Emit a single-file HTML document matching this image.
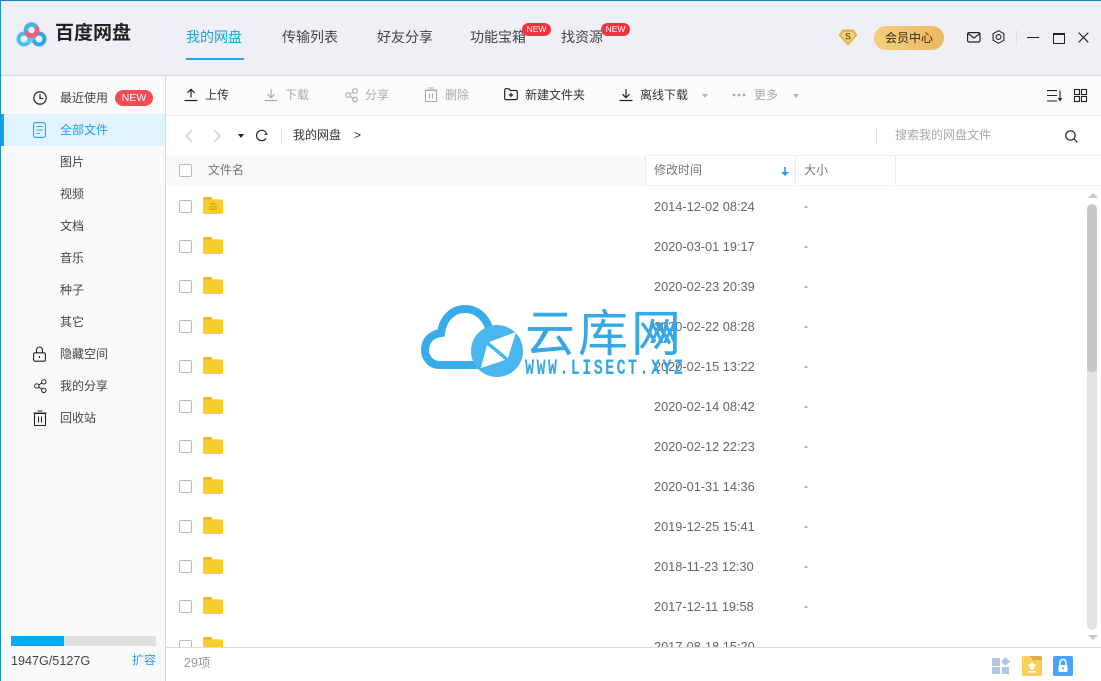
<!DOCTYPE html>
<html lang="zh"><head><meta charset="utf-8">
<style>
html,body{margin:0;padding:0}
body{width:1101px;height:681px;position:relative;overflow:hidden;background:#fff;font-family:"Liberation Sans","Noto Sans CJK SC",sans-serif;font-size:12px;color:#444}
.a{position:absolute}
.t{position:absolute;white-space:nowrap;line-height:16px}
svg{position:absolute;overflow:visible}
.nav{font-size:14px;line-height:20px;color:#444}
.new{position:absolute;background:#f5333f;color:#fff;font-size:8.5px;line-height:13px;height:13px;width:29px;text-align:center;border-radius:7px}
.tb{color:#333}.dis{color:#aaa}
.cb{position:absolute;left:179px;width:11px;height:11px;border:1px solid #b9b9b9;border-radius:2px;background:#fff}
.date{position:absolute;left:654px;color:#666;line-height:16px;white-space:nowrap;font-size:12.75px}
.dash{position:absolute;left:804px;color:#666;line-height:16px}
.f{position:absolute;left:203px}
.side{position:absolute;left:60px;color:#444;line-height:16px;white-space:nowrap}
</style></head><body>
<svg width="0" height="0" style="left:0;top:0"><defs><g id="fd"><path d="M0 2a2 2 0 0 1 2-2h5.500a2 2 0 0 1 1.500 1l1 2H0z" fill="#ecbc24"/><rect x="0" y="2.500" width="20" height="14.500" rx="2" fill="#f8cb2e"/></g></defs></svg>
<!-- header -->
<div class="a" style="left:0;top:0;width:1101px;height:75px;background:#eef0f6"></div>
<div class="a" style="left:0;top:75px;width:1101px;height:1px;background:#d6d9e3"></div>
<!-- sidebar -->
<div class="a" style="left:0;top:76px;width:165px;height:605px;background:#f9fafc"></div>
<div class="a" style="left:165px;top:76px;width:1px;height:605px;background:#d6d9e0"></div>
<div class="a" style="left:1px;top:114px;width:164px;height:32px;background:#e0f3fe"></div>
<div class="a" style="left:0;top:114px;width:4px;height:32px;background:#06a7ff"></div>
<!-- toolbar -->
<div class="a" style="left:166px;top:76px;width:935px;height:39px;background:#fafbfd"></div>
<div class="a" style="left:166px;top:115px;width:935px;height:1px;background:#eeeff2"></div>
<div class="a" style="left:166px;top:155px;width:480px;height:31px;background:#f7f8fa"></div>
<div class="a" style="left:646px;top:155px;width:455px;height:1px;background:#f0f1f3"></div>
<div class="a" style="left:646px;top:185px;width:455px;height:1px;background:#f2f3f5"></div>
<div class="a" style="left:645px;top:156px;width:1px;height:30px;background:#e8eaee"></div>
<div class="a" style="left:795px;top:156px;width:1px;height:30px;background:#e8eaee"></div>
<div class="a" style="left:895px;top:156px;width:1px;height:30px;background:#e8eaee"></div>
<!-- window border -->
<div class="a" style="left:0;top:0;width:1101px;height:1px;background:#1b80bd"></div>
<div class="a" style="left:0;top:0;width:1px;height:681px;background:#1b90d0"></div>

<!-- logo -->
<svg style="left:15px;top:21px" width="34" height="28" viewBox="0 0 34 28" fill="none">
<circle cx="9" cy="18" r="5.500" stroke="#45bff2" stroke-width="4"/>
<circle cx="24" cy="18" r="5.500" stroke="#2fa3ec" stroke-width="4"/>
<path d="M13 22 Q17 18 20.500 14" stroke="#5cc6f0" stroke-width="4"/>
<circle cx="16.500" cy="9" r="5.500" stroke="#4bb4dc" stroke-width="4.500"/>
<path d="M11.300 11 A5.500 5.500 0 0 0 21.500 11.500 A5.500 5.500 0 0 0 21 5.800" stroke="#ee5f72" stroke-width="4.500"/>
</svg>
<div class="t" style="left:55px;top:22px;font-size:19px;font-weight:bold;line-height:24px;color:#222">百度网盘</div>
<!-- nav -->
<div class="t nav" style="left:186px;top:27px;color:#1fa0e8">我的网盘</div>
<div class="a" style="left:186px;top:58px;width:58px;height:2px;background:#1fa6ee"></div>
<div class="t nav" style="left:282px;top:27px">传输列表</div>
<div class="t nav" style="left:377px;top:27px">好友分享</div>
<div class="t nav" style="left:470px;top:27px">功能宝箱</div>
<div class="new" style="left:522px;top:23px">NEW</div>
<div class="t nav" style="left:561px;top:27px">找资源</div>
<div class="new" style="left:601px;top:23px">NEW</div>
<!-- right header -->
<svg style="left:838px;top:29px" width="20" height="17" viewBox="0 0 20 17"><path d="M5 1h10l4 5-9 10L1 6z" fill="#e3b24e" stroke="#e5b650" stroke-width="1"/><path d="M6 3h8l3 3-7 8-7-8z" fill="#f6d676"/><text x="10" y="10.500" font-size="9" font-weight="bold" text-anchor="middle" fill="#7a5a1a" font-family="Liberation Sans">S</text></svg>
<div class="a" style="left:874px;top:26px;width:70px;height:24px;border-radius:12px;background:linear-gradient(90deg,#f5cf7c,#e9b964)"></div>
<div class="t" style="left:885px;top:30px;color:#3a2a10">会员中心</div>
<svg style="left:967px;top:32px" width="14" height="11" viewBox="0 0 14 11" fill="none" stroke="#222" stroke-width="1.200"><rect x=".6" y=".6" width="12.400" height="9.400" rx="1.500"/><path d="M1 1.500l6 4.500 6-4.500"/></svg>
<svg style="left:992px;top:30px" width="13" height="14" viewBox="0 0 13 14" fill="none" stroke="#222" stroke-width="1.100"><path d="M6.500.7l5.400 3v6.600l-5.400 3-5.400-3V3.700z"/><circle cx="6.500" cy="7" r="2.400"/></svg>
<div class="a" style="left:1016px;top:30px;width:1px;height:16px;background:#dcdee5"></div>
<div class="a" style="left:1027px;top:37px;width:12px;height:1px;background:#222"></div>
<div class="a" style="left:1053px;top:33px;width:10px;height:8px;border:1px solid #222;border-top:2px solid #222"></div>
<svg style="left:1078px;top:32px" width="11" height="11" viewBox="0 0 11 11" stroke="#222" stroke-width="1.100"><path d="M.7.7l9.600 9.600M10.300.7L.7 10.300"/></svg>

<!-- toolbar items -->
<svg style="left:184px;top:88px" width="14" height="14" viewBox="0 0 14 14" fill="none" stroke="#222" stroke-width="1.200"><path d="M7 9.500V1.500M3.500 4.800L7 1.300l3.500 3.500M.5 12.500h13"/></svg>
<div class="t tb" style="left:205px;top:87px">上传</div>
<svg style="left:264px;top:88px" width="14" height="14" viewBox="0 0 14 14" fill="none" stroke="#aaa" stroke-width="1.200"><path d="M7 1v8.500M3.500 6.200L7 9.700l3.500-3.500M.5 12.500h13"/></svg>
<div class="t dis" style="left:285px;top:87px">下载</div>
<svg style="left:345px;top:88px" width="13" height="14" viewBox="0 0 13 14" fill="none" stroke="#aaa" stroke-width="1.100"><circle cx="3" cy="7" r="2.300"/><circle cx="10" cy="3" r="2.300"/><circle cx="10" cy="11.500" r="2.300"/><path d="M5 5.800l3-1.700M5 8.300l3 1.900"/></svg>
<div class="t dis" style="left:365px;top:87px">分享</div>
<svg style="left:424px;top:87px" width="14" height="15" viewBox="0 0 14 15" fill="none" stroke="#aaa" stroke-width="1.100"><path d="M.5 3h13M4.500 1h5"/><rect x="1.500" y="3.500" width="11" height="11" rx="1"/><path d="M5.500 6.500v5M8.500 6.500v5"/></svg>
<div class="t dis" style="left:445px;top:87px">删除</div>
<svg style="left:504px;top:88px" width="14" height="13" viewBox="0 0 14 13" fill="none" stroke="#222" stroke-width="1.200"><path d="M.7 2a1.300 1.300 0 0 1 1.300-1.300h3l1.500 1.800H12a1.300 1.300 0 0 1 1.300 1.300v6.500A1.300 1.300 0 0 1 12 11.600H2A1.300 1.300 0 0 1 .7 10.300zM7 4.800v4.500M4.800 7h4.400"/></svg>
<div class="t tb" style="left:525px;top:87px">新建文件夹</div>
<svg style="left:619px;top:88px" width="14" height="14" viewBox="0 0 14 14" fill="none" stroke="#222" stroke-width="1.200"><path d="M7 1v8.500M3.500 6.200L7 9.700l3.500-3.500M.5 12.500h13"/></svg>
<div class="t tb" style="left:640px;top:87px">离线下载</div>
<div class="a" style="left:702px;top:94px;border:3px solid transparent;border-top:4px solid #b5b5b5;border-bottom:0"></div>
<svg style="left:732px;top:93px" width="14" height="4"><circle cx="2" cy="2" r="1.400" fill="#aaa"/><circle cx="7" cy="2" r="1.400" fill="#aaa"/><circle cx="12" cy="2" r="1.400" fill="#aaa"/></svg>
<div class="t dis" style="left:754px;top:87px">更多</div>
<div class="a" style="left:793px;top:94px;border:3px solid transparent;border-top:4px solid #b5b5b5;border-bottom:0"></div>
<svg style="left:1047px;top:90px" width="16" height="12" viewBox="0 0 16 12" fill="none" stroke="#222" stroke-width="1.100"><path d="M0 .6h10M0 5.500h10M0 11h10"/><path d="M13 .5v10"/><path d="M10.800 8l2.200 3.500L15.200 8z" fill="#222" stroke="none"/></svg>
<svg style="left:1074px;top:89px" width="13" height="13" viewBox="0 0 13 13" fill="none" stroke="#222" stroke-width="1.100"><rect x=".5" y=".5" width="5" height="5"/><rect x="7.500" y=".5" width="5" height="5"/><rect x=".5" y="7.500" width="5" height="5"/><rect x="7.500" y="7.500" width="5" height="5"/></svg>

<!-- address bar -->
<svg style="left:183px;top:129px" width="40" height="14" viewBox="0 0 40 14" fill="none" stroke="#c9c9c9" stroke-width="1.200"><path d="M9 1L3 7l6 6M31 1l6 6-6 6"/></svg>
<div class="a" style="left:238px;top:134px;border:3.500px solid transparent;border-top:4px solid #222;border-bottom:0"></div>
<svg style="left:255px;top:129px" width="13" height="13" viewBox="0 0 13 13" fill="none" stroke="#222" stroke-width="1.200"><path d="M11 9.500A5.200 5.200 0 1 1 11 3.500"/><path d="M9 5.800h3.800L11.500 3.500z" fill="#222" stroke="none"/></svg>
<div class="a" style="left:281px;top:128px;width:1px;height:16px;background:#e1e3e7"></div>
<div class="t" style="left:293px;top:127px;color:#333">我的网盘</div>
<div class="t" style="left:354px;top:127px;color:#333">&gt;</div>
<div class="a" style="left:876px;top:128px;width:1px;height:16px;background:#e1e3e7"></div>
<div class="t" style="left:895px;top:127px;color:#a8a8a8">搜索我的网盘文件</div>
<svg style="left:1065px;top:130px" width="13" height="13" viewBox="0 0 13 13" fill="none" stroke="#222" stroke-width="1.200"><circle cx="5.500" cy="5.500" r="4.700"/><path d="M9 9l3.300 3.300"/></svg>

<!-- table head -->
<div class="cb" style="top:164px"></div>
<div class="t" style="left:208px;top:162px;color:#777">文件名</div>
<div class="t" style="left:654px;top:162px;color:#777">修改时间</div>
<svg style="left:781px;top:167px" width="8" height="9" viewBox="0 0 8 9"><path d="M3.200 0h1.600v5H8L4 9 0 5h3.200z" fill="#1f9fe8"/></svg>
<div class="t" style="left:804px;top:162px;color:#777">大小</div>

<!-- rows -->
<div class="cb" style="top:200px"></div><div class="cb" style="top:240px"></div><div class="cb" style="top:280px"></div><div class="cb" style="top:320px"></div><div class="cb" style="top:360px"></div><div class="cb" style="top:400px"></div><div class="cb" style="top:440px"></div><div class="cb" style="top:480px"></div><div class="cb" style="top:520px"></div><div class="cb" style="top:560px"></div><div class="cb" style="top:600px"></div><div class="cb" style="top:640px"></div>

<svg class="f" style="top:197px" width="20" height="17" viewBox="0 0 20 17"><use href="#fd"/><path d="M6 8l4-3 4 3zM6 9h8v1.500H6zM6 11.500h8V13H6z" fill="#e4a627"/></svg>
<svg class="f" style="top:237px" width="20" height="17" viewBox="0 0 20 17"><use href="#fd"/></svg>
<svg class="f" style="top:277px" width="20" height="17" viewBox="0 0 20 17"><use href="#fd"/></svg>
<svg class="f" style="top:317px" width="20" height="17" viewBox="0 0 20 17"><use href="#fd"/></svg>
<svg class="f" style="top:357px" width="20" height="17" viewBox="0 0 20 17"><use href="#fd"/></svg>
<svg class="f" style="top:397px" width="20" height="17" viewBox="0 0 20 17"><use href="#fd"/></svg>
<svg class="f" style="top:437px" width="20" height="17" viewBox="0 0 20 17"><use href="#fd"/></svg>
<svg class="f" style="top:477px" width="20" height="17" viewBox="0 0 20 17"><use href="#fd"/></svg>
<svg class="f" style="top:517px" width="20" height="17" viewBox="0 0 20 17"><use href="#fd"/></svg>
<svg class="f" style="top:557px" width="20" height="17" viewBox="0 0 20 17"><use href="#fd"/></svg>
<svg class="f" style="top:597px" width="20" height="17" viewBox="0 0 20 17"><use href="#fd"/></svg>
<svg class="f" style="top:637px" width="20" height="17" viewBox="0 0 20 17"><use href="#fd"/></svg>

<div class="date" style="top:199px">2014-12-02 08:24</div><div class="dash" style="top:198px">-</div>
<div class="date" style="top:239px">2020-03-01 19:17</div><div class="dash" style="top:238px">-</div>
<div class="date" style="top:279px">2020-02-23 20:39</div><div class="dash" style="top:278px">-</div>
<div class="date" style="top:319px">2020-02-22 08:28</div><div class="dash" style="top:318px">-</div>
<div class="date" style="top:359px">2020-02-15 13:22</div><div class="dash" style="top:358px">-</div>
<div class="date" style="top:399px">2020-02-14 08:42</div><div class="dash" style="top:398px">-</div>
<div class="date" style="top:439px">2020-02-12 22:23</div><div class="dash" style="top:438px">-</div>
<div class="date" style="top:479px">2020-01-31 14:36</div><div class="dash" style="top:478px">-</div>
<div class="date" style="top:519px">2019-12-25 15:41</div><div class="dash" style="top:518px">-</div>
<div class="date" style="top:559px">2018-11-23 12:30</div><div class="dash" style="top:558px">-</div>
<div class="date" style="top:599px">2017-12-11 19:58</div><div class="dash" style="top:598px">-</div>
<div class="date" style="top:639px">2017-08-18 15:20</div>

<!-- watermark -->
<svg style="left:420px;top:304px" width="106" height="74" viewBox="0 0 106 74" fill="none">
<path d="M20 61 C9 61 5 52 5 46 C5 37 11 30 21 29 C23 14 33 5 45 5 C56 5 65 12 69 24" stroke="#38ace8" stroke-width="8"/>
<path d="M19 61 H60" stroke="#38ace8" stroke-width="8"/>
<circle cx="77" cy="47" r="26" fill="#4ab6f0"/>
<path d="M96 28 L69 38 L88 54 z" fill="#fff"/>
<path d="M67 41 L61 64 L85 56 z" fill="#fff"/>
</svg>
<div class="t" style="left:525px;top:306px;font-size:50px;line-height:56px;color:#35a8e6;letter-spacing:3px;font-weight:400">云库网</div>
<div class="t" style="left:525px;top:357px;font-size:21px;line-height:24px;color:#35a8e6;letter-spacing:3.300px;font-family:'Liberation Mono',monospace;transform-origin:0 0;transform:scaleX(.72) scaleY(1.050);font-weight:bold;width:300px">WWW.LISECT.XYZ</div>
<div class="t" style="left:650px;top:319px;font-size:30px;line-height:30px;color:#35a8e6;font-weight:bold;letter-spacing:-1px;transform-origin:0 0;transform:scaleX(.68)">XX</div>

<!-- scrollbar -->
<div class="a" style="left:1088px;top:193px;border:5px solid transparent;border-bottom:5px solid #c9c9c9;border-top:0"></div>
<div class="a" style="left:1087px;top:204px;width:10px;height:426px;border-radius:5px;background:#e4e4e4"></div>
<div class="a" style="left:1087px;top:204px;width:10px;height:168px;border-radius:5px 5px 4px 4px;background:#c8c8c8"></div>
<div class="a" style="left:1088px;top:635px;border:5px solid transparent;border-top:5px solid #c9c9c9;border-bottom:0"></div>

<!-- footer -->
<div class="a" style="left:166px;top:647px;width:935px;height:34px;background:#fff"></div>
<div class="a" style="left:166px;top:647px;width:935px;height:1px;background:#dcdcdc"></div>
<div class="t" style="left:184px;top:655px;color:#999;font-size:12.5px">29项</div>
<svg style="left:992px;top:657px" width="18" height="18" viewBox="0 0 18 18" fill="#b0c7e2"><rect x="0" y="1" width="8" height="8"/><path d="M13.500 0l4.500 4.500-4.500 4.500L9 4.500z"/><rect x="0" y="10" width="8" height="7"/><rect x="10" y="10" width="7" height="7"/></svg>
<svg style="left:1022px;top:656px" width="20" height="20" viewBox="0 0 20 20"><rect width="20" height="20" rx="2" fill="#f8cf58"/><path d="M8 0h10a2 2 0 0 1 2 2v2H11z" fill="#dcae47"/><path d="M10 6l4.500 4.500H12v3H8v-3H5.500zM6 15h8v1.500H6z" fill="#fff"/></svg>
<svg style="left:1053px;top:656px" width="20" height="20" viewBox="0 0 20 20"><rect width="20" height="20" rx="2" fill="#4ba3f5"/><path d="M7 9V6.500a3 3 0 0 1 6 0V9" fill="none" stroke="#fff" stroke-width="1.500"/><rect x="5.500" y="9" width="9" height="7" rx="1" fill="#fff"/><circle cx="10" cy="12.500" r="1" fill="#4ba3f5"/></svg>

<!-- sidebar -->
<svg style="left:33px;top:91px" width="14" height="14" viewBox="0 0 14 14" fill="none" stroke="#333" stroke-width="1.300"><circle cx="7" cy="7" r="6.200"/><path d="M7 3.300V7.500H10.300"/></svg>
<div class="side" style="top:90px">最近使用</div>
<div class="a" style="left:115px;top:90px;width:38px;height:16px;border-radius:8px;background:#f64a54;color:#fff;font-size:10.5px;line-height:16px;text-align:center">NEW</div>
<svg style="left:33px;top:122px" width="13" height="16" viewBox="0 0 13 16" fill="none" stroke="#2aa6ea" stroke-width="1.100"><rect x=".6" y=".6" width="11.800" height="14.800" rx="2"/><path d="M3.500 4.500h6M3.500 8h6M3.500 11.500h3.500"/></svg>
<div class="side" style="top:122px;color:#1fa0e8">全部文件</div>
<div class="side" style="top:154px">图片</div>
<div class="side" style="top:186px">视频</div>
<div class="side" style="top:218px">文档</div>
<div class="side" style="top:250px">音乐</div>
<div class="side" style="top:282px">种子</div>
<div class="side" style="top:314px">其它</div>
<svg style="left:33px;top:346px" width="13" height="16" viewBox="0 0 13 16" fill="none" stroke="#222" stroke-width="1.100"><path d="M3.500 7V4a3 3 0 0 1 6 0v3"/><rect x=".6" y="6.800" width="11.800" height="8.400" rx="1.500"/><path d="M6.500 10v2"/></svg>
<div class="side" style="top:346px">隐藏空间</div>
<svg style="left:34px;top:379px" width="13" height="14" viewBox="0 0 13 14" fill="none" stroke="#222" stroke-width="1"><circle cx="2.800" cy="7" r="2.200"/><circle cx="9.800" cy="2.800" r="2.200"/><circle cx="9.800" cy="11.300" r="2.200"/><path d="M4.700 5.900l3.200-2M4.700 8.100l3.200 2.100"/></svg>
<div class="side" style="top:378px">我的分享</div>
<svg style="left:33px;top:410px" width="14" height="16" viewBox="0 0 14 16" fill="none" stroke="#222" stroke-width="1.100"><path d="M.5 3h13M4.500 1h5"/><rect x="1.500" y="3.500" width="11" height="12" rx="1"/><path d="M5.500 6.500v6M8.500 6.500v6"/></svg>
<div class="side" style="top:410px">回收站</div>

<div class="a" style="left:11px;top:636px;width:145px;height:10px;background:#e0e0e0"></div>
<div class="a" style="left:11px;top:636px;width:53px;height:10px;background:#06a7ff"></div>
<div class="t" style="left:11px;top:653px;color:#444;font-size:12.6px">1947G/5127G</div>
<div class="t" style="left:132px;top:652px;font-size:12px;color:#2aa0e8">扩容</div>
</body></html>
